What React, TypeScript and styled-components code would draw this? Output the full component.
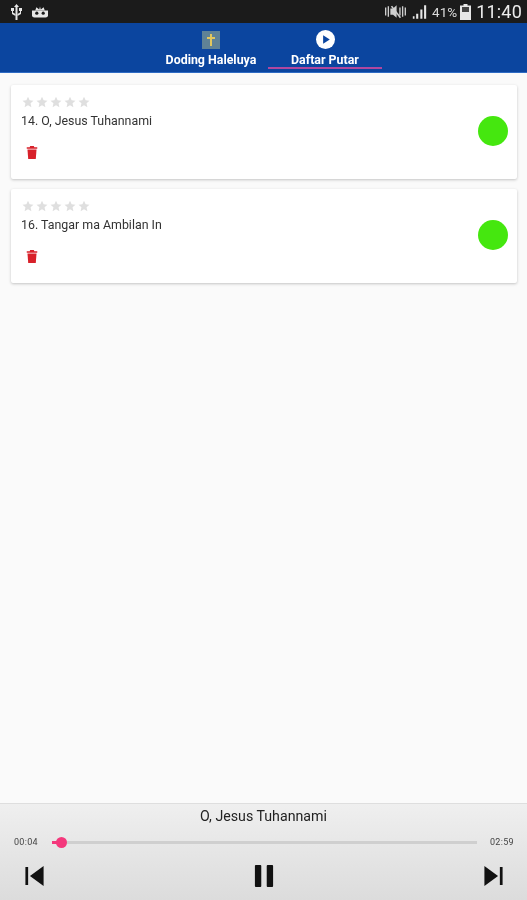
import React from "react";
import styled, { createGlobalStyle } from "styled-components";

const Global = createGlobalStyle`
  html, body { margin: 0; padding: 0; height: 100%; background: #fafafa; }
  #root { height: 100%; }
  * { box-sizing: border-box; }
`;

const Screen = styled.div`
  width: 527px;
  height: 900px;
  display: flex;
  flex-direction: column;
  overflow: hidden;
  font-family: "Roboto", "Liberation Sans", sans-serif;
  background: #fafafa;
  filter: blur(0.45px);
`;

const StatusBar = styled.div`
  height: 23px;
  flex: none;
  background: #1b1b1b;
  display: flex;
  align-items: center;
  padding: 0 5px 0 10px;
  color: #e8e8e8;
`;
const StatusLeft = styled.div`
  display: flex;
  align-items: center;
  gap: 9px;
  flex: 1;
`;
const StatusRight = styled.div`
  display: flex;
  align-items: center;
`;
const Percent = styled.span`
  font-size: 13.5px;
  margin: 0 3px 0 5px;
  color: #dcdcdc;
`;
const Clock = styled.span`
  font-size: 18px;
  margin-left: 5px;
  letter-spacing: 0.2px;
  color: #ececec;
`;

const Header = styled.div`
  height: 50px;
  flex: none;
  background: #0b459f;
  border-bottom: 1px solid #2f6bc4;
  display: flex;
  justify-content: center;
  padding-left: 9px;
`;
const Tab = styled.div`
  width: 114px;
  display: flex;
  flex-direction: column;
  align-items: center;
  padding-top: 6px;
  position: relative;
  color: #fff;
  font-size: 12.4px;
  font-weight: 700;
`;
const TabIcon = styled.div`
  height: 21px;
  display: flex;
  align-items: center;
  justify-content: center;
`;
const TabLabel = styled.div`
  margin-top: 2px;
  line-height: 15px;
  white-space: nowrap;
`;
const TabLine = styled.div`
  position: absolute;
  left: 0;
  right: 0;
  bottom: 3px;
  height: 2px;
  background: #b0479f;
`;

const List = styled.div`
  flex: 1;
  padding: 12px 10px 0 11px;
  display: flex;
  flex-direction: column;
  gap: 10px;
`;
const Card = styled.div`
  height: 94px;
  background: #fff;
  border-radius: 2px;
  box-shadow: 0 1px 3px rgba(0, 0, 0, 0.22);
  padding: 10px 9.5px 0 10px;
  display: flex;
  align-items: flex-start;
`;
const CardBody = styled.div`
  flex: 1;
  display: flex;
  flex-direction: column;
`;
const Stars = styled.div`
  display: flex;
  gap: 2px;
  height: 13px;
  align-items: center;
  padding-left: 1px;
`;
const Title = styled.div`
  margin-top: 5px;
  font-size: 12.4px;
  line-height: 15px;
  color: #333;
`;
const Trash = styled.div`
  margin: 18px 0 0 5px;
  height: 13px;
  display: flex;
`;
const Dot = styled.div`
  width: 30px;
  height: 30px;
  border-radius: 50%;
  background: #45e70f;
  margin-top: 21px;
`;

const Player = styled.div`
  height: 97px;
  flex: none;
  border-top: 1px solid #dedede;
  background: linear-gradient(#efefef, #dcdcdc);
  display: flex;
  flex-direction: column;
`;
const NowPlaying = styled.div`
  text-align: center;
  font-size: 14.2px;
  line-height: 17px;
  margin-top: 4px;
  color: #222;
`;
const SeekRow = styled.div`
  display: flex;
  align-items: center;
  margin-top: 9px;
  height: 16px;
  padding: 0 13px 0 14px;
`;
const Time = styled.span`
  font-size: 9px;
  letter-spacing: 0.3px;
  color: #444;
  width: 24px;
  flex: none;
`;
const Track = styled.div`
  flex: 1;
  height: 3px;
  margin: 0 13px 0 14px;
  background: #cfcfcf;
  position: relative;
`;
const Fill = styled.div`
  position: absolute;
  left: 0;
  top: 0;
  height: 3px;
  background: #f4387c;
`;
const Thumb = styled.div`
  position: absolute;
  top: -4px;
  width: 11px;
  height: 11px;
  border-radius: 50%;
  background: #f4387c;
`;
const Controls = styled.div`
  display: flex;
  justify-content: space-between;
  align-items: center;
  padding: 0 23px 0 24px;
  margin-top: 14px;
`;

const Star = () => (
  <svg width="12" height="12" viewBox="0 0 24 24" fill="#dfdfdf">
    <path d="M12 1.5l3.2 7.2 7.8.8-5.9 5.2 1.7 7.7L12 18.4l-6.8 4 1.7-7.7L1 9.5l7.8-.8z" />
  </svg>
);

const TrashIcon = () => (
  <svg width="12" height="13" viewBox="0 0 13 14" fill="#d8212a">
    <path d="M4.5 0h4l.5 1.2h3.2v1.8H.8V1.2H4z" />
    <path d="M1.6 3.8h9.8L10.6 14H2.4z" />
  </svg>
);

const songs = ["14. O, Jesus Tuhannami", "16. Tangar ma Ambilan In"];

export default function App() {
  return (
    <Screen>
      <Global />
      <StatusBar>
        <StatusLeft>
          <svg width="13" height="16" viewBox="0 0 13 16" fill="#e6e6e6">
            <path d="M5.5 2h2v14h-2zM4 3l2.500-3L9 3z" />
            <path d="M1 4h3v3H3v1.500l2.500 1.500v2L2 10V7H1zM9 4h3v3h-1v3l-3.500 2v-2L10 8.500V7H9z" />
          </svg>
          <svg width="16" height="12" viewBox="0 0 20 14" fill="#e6e6e6">
            <path d="M0 5h20v6a3 3 0 0 1-3 3H3a3 3 0 0 1-3-3z" />
            <path d="M4 5l1.500-4L9 4l1-4 1 4 3.500-3L16 5z" />
            <circle cx="6" cy="8.500" r="2" fill="#1b1b1b" />
            <circle cx="14" cy="8.500" r="2" fill="#1b1b1b" />
          </svg>
        </StatusLeft>
        <StatusRight>
          <svg width="25" height="15" viewBox="0 0 28 15" fill="#cfcfcf">
            <path d="M0 3h1.500v9H0zM3 1.500h1.500v12H3zM6 4h3l4-3.500v14L9 11H6z" />
            <path d="M8 1l10 13-1.400 1L6.600 2z" />
            <path d="M16 3h1.500v9H16zM19 1.500h1.500v12H19zM22 3h1.500v9H22z" />
          </svg>
          <svg width="15" height="16" viewBox="0 0 18 16" fill="#e6e6e6" style={{ marginLeft: 2 }}>
            <path d="M1 13h2v3H1zM5 10h2.500v6H5zM10 5h2.500v11H10zM14.500 0H17v16h-2.500z" />
          </svg>
          <Percent>41%</Percent>
          <svg width="11" height="16" viewBox="0 0 11 16" fill="#e6e6e6">
            <path d="M3.500 0h4v1.500H11V16H0V1.500h3.500z" />
            <path d="M2 3h7v5H2z" fill="#444" />
          </svg>
          <Clock>11:40</Clock>
        </StatusRight>
      </StatusBar>

      <Header>
        <Tab>
          <TabIcon>
            <svg width="18" height="18" viewBox="0 0 18 18">
              <rect width="18" height="18" fill="#5f8296" />
              <path d="M8 3h2v3h3v2h-3v7H8V8H5V6h3z" fill="#e2c75e" />
            </svg>
          </TabIcon>
          <TabLabel>Doding Haleluya</TabLabel>
        </Tab>
        <Tab>
          <TabIcon>
            <svg width="19" height="19" viewBox="0 0 20 20">
              <circle cx="10" cy="10" r="10" fill="#fff" />
              <path d="M7.500 5.500l7 4.500-7 4.500z" fill="#0b459f" />
            </svg>
          </TabIcon>
          <TabLabel>Daftar Putar</TabLabel>
          <TabLine />
        </Tab>
      </Header>

      <List>
        {songs.map((song) => (
          <Card key={song}>
            <CardBody>
              <Stars>
                {[0, 1, 2, 3, 4].map((i) => (
                  <Star key={i} />
                ))}
              </Stars>
              <Title>{song}</Title>
              <Trash>
                <TrashIcon />
              </Trash>
            </CardBody>
            <Dot />
          </Card>
        ))}
      </List>

      <Player>
        <NowPlaying>O, Jesus Tuhannami</NowPlaying>
        <SeekRow>
          <Time>00:04</Time>
          <Track>
            <Fill style={{ width: 10 }} />
            <Thumb style={{ left: 4 }} />
          </Track>
          <Time>02:59</Time>
        </SeekRow>
        <Controls>
          <svg width="21" height="20" viewBox="0 0 22 22" fill="#111">
            <path d="M1 1h3v20H1zM21 0v22L6 11z" />
          </svg>
          <svg width="20" height="24" viewBox="0 0 22 24" fill="#111">
            <rect x="1" y="0" width="7" height="24" rx="1" />
            <rect x="14" y="0" width="7" height="24" rx="1" />
          </svg>
          <svg width="21" height="20" viewBox="0 0 22 22" fill="#111">
            <path d="M18 1h3v20h-3zM1 0v22l15-11z" />
          </svg>
        </Controls>
      </Player>
    </Screen>
  );
}
